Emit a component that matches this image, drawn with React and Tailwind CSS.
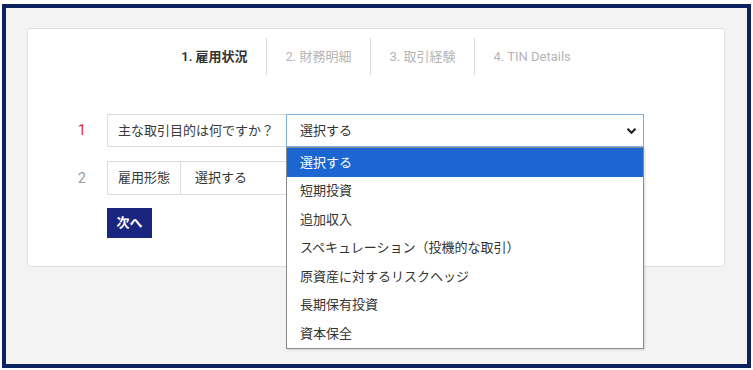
import React from 'react'

const font = { fontFamily: 'Roboto, "Noto Sans CJK JP", sans-serif' }

const steps = ['1. 雇用状況', '2. 財務明細', '3. 取引経験', '4. TIN Details']
const options = [
  '選択する',
  '短期投資',
  '追加収入',
  'スペキュレーション（投機的な取引）',
  '原資産に対するリスクヘッジ',
  '長期保有投資',
  '資本保全',
]

function Chevron() {
  return (
    <svg width="11" height="8" viewBox="0 0 11 8" className="shrink-0">
      <path d="M1.5 1.8 L5.5 5.8 L9.5 1.8" fill="none" stroke="#222" strokeWidth="2.2" />
    </svg>
  )
}

export default function App() {
  return (
    <div className="w-[753px] h-[370px] bg-white pt-[4px] px-[2px] pb-[2px] text-[13px]" style={font}>
      <div className="h-full border-[4px] border-[#0b2160] bg-[#f3f3f3] pt-[20px] pl-[21px]">
        <div className="w-[698px] h-[239px] bg-white border border-[#dedede] rounded-[3px]">
          {/* steps */}
          <div className="flex justify-center pt-[9px]">
            {steps.map((s, i) => (
              <div
                key={s}
                className={
                  'h-[37px] px-[18.5px] flex items-center ' +
                  (i > 0 ? 'border-l border-[#d9d9d9] ' : '') +
                  (i === 0 ? 'text-[#333] font-semibold' : 'text-[#b5b5b5]')
                }
              >
                {s}
              </div>
            ))}
          </div>

          {/* form */}
          <div className="mt-[39px] pl-[41px] flex flex-col">
            <div className="flex items-center h-[33px]">
              <div className="w-[26px] text-center text-[#f01a1a] text-[14px]">1</div>
              <div className="ml-[12px] h-full w-[180px] border border-[#dcdcdc] flex items-center pl-[10px] text-[#3a3a3a]">
                主な取引目的は何ですか？
              </div>
              <div className="relative -ml-px h-full w-[358px]">
                <div className="h-full border border-[#7eb0de] flex items-center justify-between pl-[13px] pr-[6px] text-[#333]">
                  <span>選択する</span>
                  <Chevron />
                </div>
                <div className="absolute left-0 top-full w-[358px] bg-white border border-[#8c8c8c] z-10 shadow-[1px_1px_2px_rgba(0,0,0,0.15)]">
                  {options.map((o, i) => (
                    <div
                      key={o}
                      className={
                        'h-[28.5px] flex items-center pl-[13px] ' +
                        (i === 0 ? 'bg-[#1b66d0] text-white' : 'text-[#333]')
                      }
                    >
                      {o}
                    </div>
                  ))}
                </div>
              </div>
            </div>

            <div className="flex items-center h-[34px] mt-[14px]">
              <div className="w-[26px] text-center text-[#9a9a9a] text-[14px]">2</div>
              <div className="ml-[12px] h-full w-[74px] border border-[#dcdcdc] flex items-center justify-center text-[#3a3a3a]">
                雇用形態
              </div>
              <div className="-ml-px h-full w-[464px] border border-[#dcdcdc] flex items-center pl-[14px] text-[#333]">
                選択する
              </div>
            </div>

            <div className="mt-[13px] ml-[38px]">
              <button className="w-[45px] h-[30px] bg-[#1a2580] text-white font-bold text-[13px]">次へ</button>
            </div>
          </div>
        </div>
      </div>
    </div>
  )
}
